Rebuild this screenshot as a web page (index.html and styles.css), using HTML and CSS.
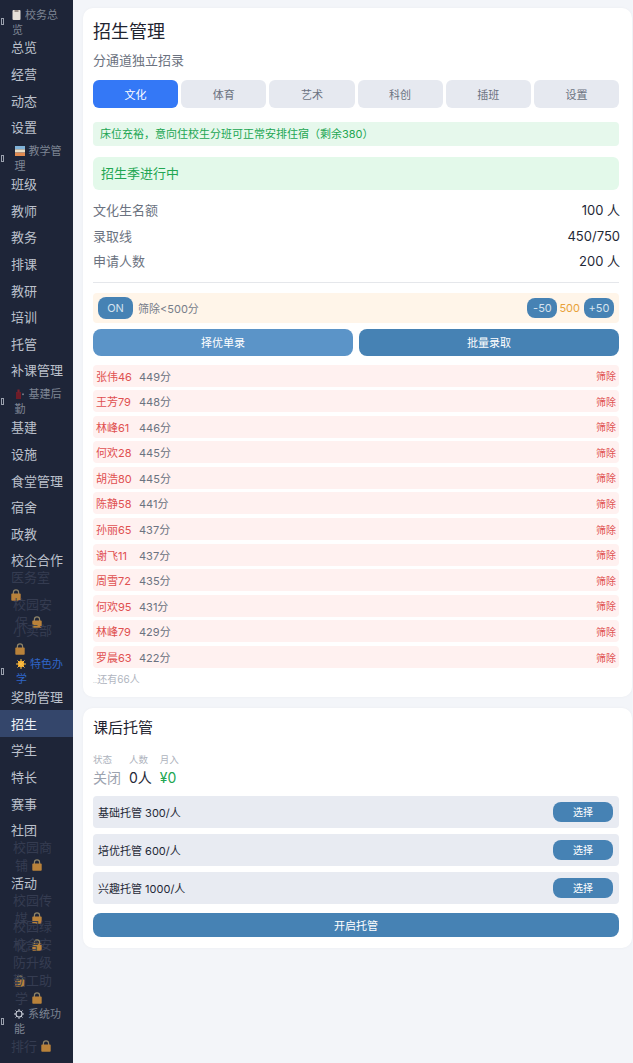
FILE: index.html
```html
<!DOCTYPE html>
<html>
<head>
  <meta charset="UTF-8">
  <title>招生管理</title>
  <link rel="stylesheet" href="styles.css">
</head>
<body>
  <svg class="defs" width="0" height="0">
    <symbol id="lock" viewBox="0 0 10 12">
      <path d="M2.4 5V3.4a2.6 2.6 0 0 1 5.2 0V5" fill="none" stroke="#8f8468" stroke-width="1.2"/>
      <rect x="0.3" y="4.600" width="9.400" height="7.200" rx="0.8" fill="#b9823a"/>
    </symbol>
  </svg>

  <div class="app">
    <nav class="sidebar">
      <div class="nav-group">
        <i class="tofu"></i>
        <span class="group-text g1"><svg class="emoji clip" viewBox="0 0 8 10"><rect width="8" height="10" rx="1" fill="#e6e0d8"/><rect x="2" width="4" height="2" fill="#9a8f88"/></svg> 校务总览</span>
      </div>
      <div class="nav-item">总览</div>
      <div class="nav-item">经营</div>
      <div class="nav-item">动态</div>
      <div class="nav-item">设置</div>

      <div class="nav-group">
        <i class="tofu"></i>
        <span class="group-text g2"><svg class="emoji" viewBox="0 0 10 10"><rect width="10" height="3.300" fill="#7fb2d8"/><rect y="3.300" width="10" height="3.300" fill="#e8dfc8"/><rect y="6.600" width="10" height="3.400" fill="#e08a50"/></svg> 教学管理</span>
      </div>
      <div class="nav-item">班级</div>
      <div class="nav-item">教师</div>
      <div class="nav-item">教务</div>
      <div class="nav-item">排课</div>
      <div class="nav-item">教研</div>
      <div class="nav-item">培训</div>
      <div class="nav-item">托管</div>
      <div class="nav-item">补课管理</div>

      <div class="nav-group">
        <i class="tofu"></i>
        <span class="group-text g2"><svg class="emoji" viewBox="0 0 10 10"><rect x="1" y="3" width="5" height="7" fill="#6e1c28"/><rect x="2.400" y="0.500" width="2.200" height="3" fill="#7a2430"/><rect x="7" y="4.500" width="2" height="1.600" fill="#6c7280"/></svg> 基建后勤</span>
      </div>
      <div class="nav-item">基建</div>
      <div class="nav-item">设施</div>
      <div class="nav-item">食堂管理</div>
      <div class="nav-item">宿舍</div>
      <div class="nav-item">政教</div>
      <div class="nav-item">校企合作</div>
      <div class="nav-item locked l0"><span>医务室<br><svg class="lock"><use href="#lock"/></svg></span></div>
      <div class="nav-item locked"><span>校园安<br><b>保 <svg class="lock"><use href="#lock"/></svg></b></span></div>
      <div class="nav-item locked"><span>小卖部<br><b><svg class="lock"><use href="#lock"/></svg></b></span></div>

      <div class="nav-group special">
        <i class="tofu"></i>
        <span class="group-text g4"><svg class="emoji" viewBox="0 0 10 10"><circle cx="5" cy="5" r="3.200" fill="#f7a823"/><path d="M5 0v10M0 5h10M1.500 1.500l7 7M8.500 1.500l-7 7" stroke="#f9c04a" stroke-width="1"/></svg> 特色办学</span>
      </div>
      <div class="nav-item">奖助管理</div>
      <div class="nav-item active">招生</div>
      <div class="nav-item">学生</div>
      <div class="nav-item">特长</div>
      <div class="nav-item">赛事</div>
      <div class="nav-item">社团</div>
      <div class="nav-item locked"><span>校园商<br><b>铺 <svg class="lock"><use href="#lock"/></svg></b></span></div>
      <div class="nav-item">活动</div>
      <div class="nav-item locked"><span>校园传<br><b>媒 <svg class="lock"><use href="#lock"/></svg></b></span></div>
      <div class="nav-item locked"><span>校园绿<br><b>化 <svg class="lock"><use href="#lock"/></svg></b></span></div>
      <div class="nav-item locked"><span>校舍安<br>防升级<br><b><svg class="lock"><use href="#lock"/></svg></b></span></div>
      <div class="nav-item locked"><span>勤工助<br><b>学 <svg class="lock"><use href="#lock"/></svg></b></span></div>

      <div class="nav-group">
        <i class="tofu"></i>
        <span class="group-text"><svg class="emoji" viewBox="0 0 10 10"><circle cx="5" cy="5" r="3" fill="none" stroke="#c5cad4" stroke-width="1.200"/><path d="M5 0v2M5 8v2M0 5h2M8 5h2M1.500 1.500l1.400 1.400M7.100 7.100l1.400 1.400M8.500 1.500L7.100 2.900M2.900 7.100L1.500 8.500" stroke="#c5cad4" stroke-width="1"/></svg> 系统功能</span>
      </div>
      <div class="nav-item locked l0"><span>排行 <svg class="lock"><use href="#lock"/></svg></span></div>
    </nav>

    <main class="content">
      <section class="card">
        <h1 class="card-title">招生管理</h1>
        <p class="subtitle">分通道独立招录</p>
        <div class="tabs">
          <button class="tab on">文化</button>
          <button class="tab">体育</button>
          <button class="tab">艺术</button>
          <button class="tab">科创</button>
          <button class="tab">插班</button>
          <button class="tab">设置</button>
        </div>
        <div class="notice">床位充裕，意向住校生分班可正常安排住宿（剩余380）</div>
        <div class="banner">招生季进行中</div>
        <div class="stats">
          <div class="stat"><span>文化生名额</span><strong>100 人</strong></div>
          <div class="stat"><span>录取线</span><strong>450/750</strong></div>
          <div class="stat"><span>申请人数</span><strong>200 人</strong></div>
        </div>
        <hr class="divider">
        <div class="filter">
          <button class="pill on-btn">ON</button>
          <span class="filter-text">筛除&lt;500分</span>
          <button class="pill step">-50</button>
          <span class="filter-num">500</span>
          <button class="pill step">+50</button>
        </div>
        <div class="actions">
          <button class="action light">择优单录</button>
          <button class="action">批量录取</button>
        </div>
        <ul class="applicants">
          <li><em>张伟46</em><span>449分</span><u>筛除</u></li>
          <li><em>王芳79</em><span>448分</span><u>筛除</u></li>
          <li><em>林峰61</em><span>446分</span><u>筛除</u></li>
          <li><em>何欢28</em><span>445分</span><u>筛除</u></li>
          <li><em>胡浩80</em><span>445分</span><u>筛除</u></li>
          <li><em>陈静58</em><span>441分</span><u>筛除</u></li>
          <li><em>孙丽65</em><span>437分</span><u>筛除</u></li>
          <li><em>谢飞11</em><span>437分</span><u>筛除</u></li>
          <li><em>周雪72</em><span>435分</span><u>筛除</u></li>
          <li><em>何欢95</em><span>431分</span><u>筛除</u></li>
          <li><em>林峰79</em><span>429分</span><u>筛除</u></li>
          <li><em>罗晨63</em><span>422分</span><u>筛除</u></li>
        </ul>
        <div class="more"><span class="dots">...</span>还有66人</div>
      </section>

      <section class="card care">
        <h2 class="card-title small">课后托管</h2>
        <div class="care-stats">
          <div><label>状态</label><p class="off">关闭</p></div>
          <div><label>人数</label><p>0人</p></div>
          <div><label>月入</label><p class="money">¥0</p></div>
        </div>
        <div class="option"><span>基础托管 300/人</span><button class="pick">选择</button></div>
        <div class="option"><span>培优托管 600/人</span><button class="pick">选择</button></div>
        <div class="option"><span>兴趣托管 1000/人</span><button class="pick">选择</button></div>
        <button class="start">开启托管</button>
      </section>
    </main>
  </div>
</body>
</html>
```

FILE: styles.css
```css
* {
  box-sizing: border-box;
}
html, body {
  margin: 0;
  height: 100%;
  overflow: hidden;
}
body {
  background-color: #f3f5f9;
  color: #1f2937;
  font-family: Inter, "Noto Sans CJK SC", sans-serif;
}
button {
  border: none;
  font-family: inherit;
  color: #fff;
  padding: 0;
}
.defs {
  position: absolute;
}
.app {
  display: flex;
  height: 1063px;
}

/* sidebar */
.sidebar {
  width: 73px;
  flex-shrink: 0;
  background-color: #1e2538;
  padding-top: 3.3px;
  overflow: hidden;
}
.nav-item {
  height: 26.6px;
  padding-left: 11px;
  display: flex;
  align-items: center;
  font-size: 13px;
  color: #bcc1cc;
  white-space: nowrap;
}
.nav-item.active {
  background-color: #34466b;
  color: #f1f4f9;
}
.nav-item.locked {
  color: #353c51;
  line-height: 18.500px;
  padding-left: 13px;
}
.nav-item.locked.l0 {
  padding-left: 11px;
}
.nav-item.locked b {
  font-weight: normal;
  padding-left: 2px;
}
.lock {
  width: 10px;
  height: 12px;
  vertical-align: -1px;
}
.nav-group {
  height: 30.4px;
  display: flex;
  align-items: center;
  font-size: 11px;
  line-height: 15px;
  color: #7d8493;
}
.special {
  color: #2f66c8;
}
.tofu {
  width: 3px;
  height: 7px;
  border: 1px solid #9aa0ad;
  margin: 7px 0 0 1px;
  flex-shrink: 0;
}
.group-text {
  width: 48px;
  margin: 8px 0 0 10px;
  word-break: break-all;
}
.group-text.g1 {
  margin-left: 8px;
}
.group-text.g2 {
  margin-left: 10.500px;
}
.group-text.g4 {
  margin-left: 12px;
}
.emoji {
  width: 10px;
  height: 10px;
  margin-right: 1px;
  vertical-align: -1px;
}
.emoji.clip {
  width: 9px;
}

/* cards */
.content {
  flex: 1;
  padding: 8px 1px 0 10px;
}
.card {
  background-color: #fff;
  border-radius: 10px;
  padding: 13px 13px 9.5px 10px;
  margin-bottom: 10.6px;
  box-shadow: 0 0 3px rgba(0,0,0,0.04);
}
.card.care {
  padding-bottom: 11px;
}
.card-title {
  margin: 0;
  font-size: 18px;
  font-weight: normal;
  line-height: 22px;
  color: #1f2430;
}
.card-title.small {
  font-size: 15px;
  margin-top: -4px;
}
.subtitle {
  margin: 7px 0 0;
  font-size: 13px;
  line-height: 20px;
  color: #6b7280;
}
.tabs {
  display: flex;
  gap: 3px;
  margin-top: 10px;
}
.tab {
  flex: 1;
  height: 28px;
  font-size: 11px;
  background-color: #e6e9f0;
  color: #6b7280;
  border-radius: 6px;
}
.tab.on {
  background-color: #3478f6;
  color: #fff;
}
.notice {
  margin-top: 14px;
  height: 24px;
  line-height: 24px;
  padding-left: 7px;
  font-size: 11px;
  color: #22a652;
  background-color: #e6f8ec;
  border-radius: 4px;
}
.banner {
  margin-top: 11px;
  height: 33px;
  line-height: 33px;
  padding-left: 8px;
  font-size: 13px;
  color: #22a652;
  background-color: #e3f9ea;
  border-radius: 6px;
}
.stats {
  margin-top: 8px;
}
.stat {
  display: flex;
  justify-content: space-between;
  margin-right: -1px;
  font-size: 13px;
  line-height: 25.5px;
  color: #6b7280;
}
.stat strong {
  font-weight: normal;
  color: #1f2937;
}
.divider {
  border: none;
  border-top: 1px solid #e5e7eb;
  margin: 7px 0 10px;
}
.filter {
  display: flex;
  align-items: center;
  height: 30px;
  padding: 0 5px;
  background-color: #fff5e9;
  border-radius: 4px;
}
.pill {
  background-color: #4682b4;
  border-radius: 8px;
  font-size: 11px;
  color: #d5e3ef;
}
.on-btn {
  width: 35px;
  height: 22px;
}
.filter-text {
  flex: 1;
  margin-left: 5px;
  font-size: 11px;
  color: #777d89;
}
.step {
  width: 30px;
  height: 20px;
}
.filter-num {
  margin: 0 4px 0 2px;
  font-size: 11px;
  color: #e8a23a;
}
.actions {
  display: flex;
  gap: 6px;
  margin-top: 6px;
}
.action {
  flex: 1;
  height: 27px;
  font-size: 11px;
  background-color: #4682b4;
  border-radius: 8px;
}
.action.light {
  background-color: #5b94c8;
}
.applicants {
  list-style: none;
  margin: 9px 0 0;
  padding: 0;
}
.applicants li {
  display: flex;
  align-items: center;
  height: 22px;
  margin-bottom: 3.6px;
  padding: 0 3px;
  font-size: 11px;
  background-color: #fff1f0;
  border-radius: 4px;
}
.applicants em {
  font-style: normal;
  color: #e05050;
  width: 43px;
}
.applicants span {
  flex: 1;
  color: #6b7280;
}
.applicants u {
  text-decoration: none;
  font-size: 10px;
  color: #e05050;
}
.more {
  font-size: 10px;
  line-height: 14px;
  margin-top: 1px;
  color: #b0b5c0;
}
.dots {
  font-size: 5px;
}
.care-stats {
  display: flex;
  gap: 8px;
  margin-top: 14px;
}
.care-stats label {
  display: block;
  font-size: 9.500px;
  line-height: 13px;
  color: #aeb3bd;
}
.care-stats p {
  margin: 2px 0 0;
  font-size: 14px;
  line-height: 20px;
  color: #1f2937;
}
.care-stats p.off {
  color: #9ca3af;
}
.care-stats p.money {
  color: #22a652;
}
.option {
  display: flex;
  align-items: center;
  justify-content: space-between;
  height: 32px;
  margin-bottom: 6px;
  padding: 0 6px 0 5px;
  font-size: 11px;
  background-color: #e8ebf2;
  border-radius: 4px;
}
.care-stats + .option {
  margin-top: 8px;
}
.pick {
  width: 60px;
  height: 20px;
  font-size: 10px;
  background-color: #4682b4;
  border-radius: 8px;
}
.start {
  display: block;
  width: 100%;
  height: 24px;
  margin-top: 9px;
  font-size: 11px;
  background-color: #4682b4;
  border-radius: 8px;
}
```
